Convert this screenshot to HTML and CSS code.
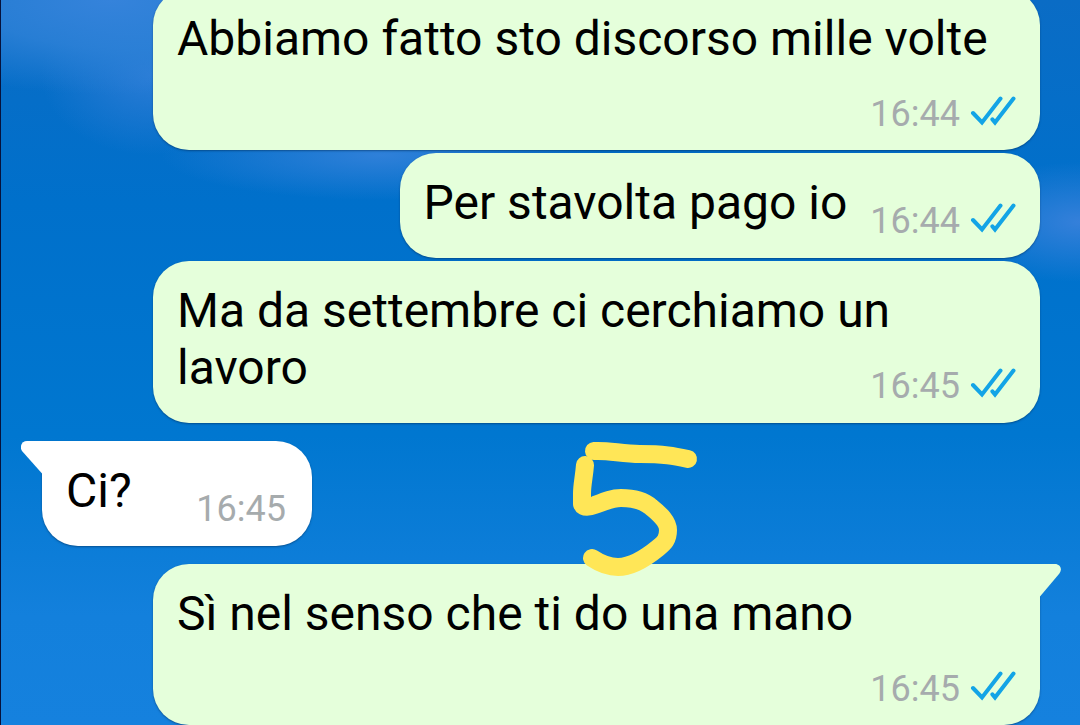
FILE: index.html
```html
<!DOCTYPE html>
<html lang="it">
<head>
    <meta charset="UTF-8">
    <meta name="viewport" content="width=device-width, initial-scale=1.0">
    <title>Chat</title>
    <link rel="stylesheet" href="styles.css">
</head>
<body>
    <svg class="defs" aria-hidden="true">
        <symbol id="ticks" viewBox="0 0 46 30">
            <path d="M3 17 12 26.5 30.5 2.5M22.4 23.4 25 26.5 43.5 2.5"/>
        </symbol>
    </svg>

    <main class="chat">
        <div class="message out">
            Abbiamo fatto sto discorso mille volte
            <span class="meta"><time>16:44</time><svg class="ticks"><use href="#ticks"/></svg></span>
        </div>
        <div class="message out">
            Per stavolta pago io
            <span class="meta"><time>16:44</time><svg class="ticks"><use href="#ticks"/></svg></span>
        </div>
        <div class="message out">
            Ma da settembre ci cerchiamo un lavoro
            <span class="meta"><time>16:45</time><svg class="ticks"><use href="#ticks"/></svg></span>
        </div>
        <div class="message in first">
            <svg class="tail" viewBox="0 0 22 33"><path d="M22 0H6C1 0-2 5 1 10L21 32.5H22Z"/></svg>
            Ci?
            <span class="meta"><time>16:45</time></span>
        </div>
        <div class="message out first">
            <svg class="tail" viewBox="0 0 22 33"><path d="M0 0H16C21 0 24 5 20 10L1 32.5H0Z"/></svg>
            Sì nel senso che ti do una mano
            <span class="meta"><time>16:45</time><svg class="ticks"><use href="#ticks"/></svg></span>
        </div>

        <!-- hand-drawn number over the chat -->
        <svg class="scribble" viewBox="570 440 130 138">
            <path d="M594 451C608 450 622 454 640 454C664 454 674 456 688 459"/>
            <path d="M585 465C584 478 582 484 582 494V504C583 508 590 507 595 505C605 501 612 498 621 498C633 498 644 501 651 507C661 515 668 522 668 530C668 540 664 543 658 548C647 557 632 567 618 567C606 567 598 562 592 558"/>
        </svg>
    </main>
</body>
</html>
```
FILE: styles.css
```css
* {
    box-sizing: border-box;
}
body {
    margin: 0;
    font-family: Roboto, sans-serif;
    color: #000;
}
.defs {
    position: absolute;
    width: 0;
    height: 0;
}
.chat {
    position: relative;
    display: flex;
    flex-direction: column;
    justify-content: flex-end;
    gap: 3px;
    height: 100vh;
    padding: 0 40px 0 41px;
    overflow: hidden;
    border-left: 1px solid #06123c;
    background:
        radial-gradient(ellipse 260px 95px at 110px 0, #3583db 0%, #2f82d8cc 50%, transparent 100%),
        radial-gradient(ellipse 110px 80px at 150px 75px, #2a7cd6 0%, transparent 100%),
        radial-gradient(ellipse 220px 45px at 380px 155px, #2f80d9 0%, transparent 100%),
        radial-gradient(ellipse 130px 60px at 100% 222px, #3580da 0%, transparent 100%),
        linear-gradient(#0a6cc5 0%, #0070cb 28%, #0077d0 60%, #1380dc 85%, #1581de 100%);
}
.message {
    display: flow-root;
    position: relative;
    flex-shrink: 0;
    min-width: 270px;
    max-width: 887px;
    padding: 21px 24px 27px;
    border-radius: 36px;
    font-size: 48px;
    line-height: 57px;
    box-shadow: 0 1px 2px rgba(0, 40, 80, 0.5);
}
.out {
    align-self: flex-end;
    background-color: #e5ffdb;
}
.in {
    align-self: flex-start;
    padding-right: 26px;
    background-color: #fff;
}
.first {
    margin-top: 15px;
}
.out.first {
    border-top-right-radius: 0;
}
.in.first {
    border-top-left-radius: 0;
}
.tail {
    position: absolute;
    top: 0;
    width: 22px;
    height: 33px;
}
.out .tail {
    left: calc(100% - 1px);
    fill: #e5ffdb;
}
.in .tail {
    right: calc(100% - 1px);
    fill: #fff;
}
/* sits on the last line when there is room, otherwise drops below it */
.meta {
    float: right;
    display: flex;
    align-items: center;
    gap: 10px;
    margin: 26px 0 -12px 23px;
    font-size: 36px;
    line-height: 42px;
    color: #a6abad;
}
.ticks {
    width: 46px;
    height: 30px;
    margin-bottom: 6px;
    fill: none;
    stroke: #13a4e6;
    stroke-width: 4;
    stroke-linecap: round;
}
.scribble {
    position: absolute;
    left: 569px;
    bottom: 147px;
    width: 130px;
    height: 138px;
    fill: none;
    stroke: #ffe657;
    stroke-width: 18;
    stroke-linecap: round;
    stroke-linejoin: round;
}
```
